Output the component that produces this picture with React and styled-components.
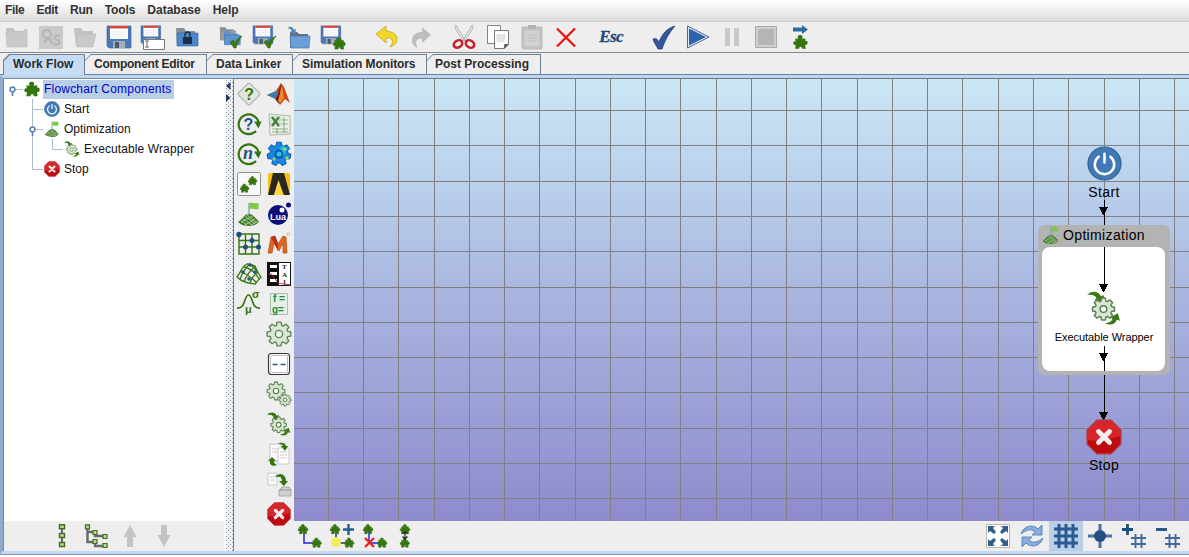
import React from 'react';
import styled, { createGlobalStyle, css } from 'styled-components';

const Global = createGlobalStyle`
  *, *::before, *::after { box-sizing: border-box; }
  html, body { margin: 0; padding: 0; overflow: hidden; background: #fff; }
  body { font-family: "Liberation Sans", Arial, sans-serif; font-size: 12px; color: #111; }
`;

/* ---------- layout ---------- */

const Window = styled.div`
  display: flex;
  flex-direction: column;
  width: 1189px;
  height: 557px;
  background: #fff;
`;

const MenuBar = styled.nav`
  display: flex;
  height: 22px;
  flex: none;
  padding-left: 5px;
  gap: 12px;
  background: linear-gradient(#fff, #dcdcdc);
  border-bottom: 1px solid #ccc;
`;

const MenuItem = styled.span`
  font-weight: bold;
  color: #333;
  line-height: 20px;
  letter-spacing: ${(p) => p.$spacing || 0}px;
`;

const Toolbar = styled.div`
  display: flex;
  align-items: center;
  flex: none;
  height: 31px;
  background: #eee;
  border-bottom: 1px solid #888;
`;

const ToolGroup = styled.div`
  display: flex;
  margin-left: ${(p) => p.$gap || 0}px;
`;

const ToolButton = styled.span`
  display: flex;
  align-items: center;
  justify-content: center;
  flex: none;
  width: ${(p) => p.$width || 34}px;
  height: 30px;
  background: ${(p) => (p.$active ? '#b8cfe5' : 'transparent')};
`;

const EscText = styled.span`
  font: italic bold 17px "Liberation Serif", serif;
  color: #1d4775;
  letter-spacing: -0.6px;
  -webkit-text-stroke: 0.3px #1d4775;
`;

const TabStrip = styled.div`
  display: flex;
  align-items: flex-end;
  flex: none;
  height: 22px;
  padding-left: 3px;
  background: #eee;
  border-bottom: 1px solid #6382a8;
`;

const chamfer = 'polygon(6px 0, 100% 0, 100% 100%, 0 100%, 0 6px)';

const Tab = styled.div`
  position: relative;
  isolation: isolate;
  width: ${(p) => p.$width}px;
  height: 20px;
  padding-left: ${(p) => p.$pad || 9}px;
  margin-bottom: ${(p) => (p.$selected ? -1 : 0)}px;
  ${(p) => p.$selected && css`height: 21px;`}
  line-height: 21px;
  font-weight: bold;
  color: #2b2b2b;
  white-space: nowrap;
  letter-spacing: ${(p) => p.$spacing || 0}px;
  background: #6f7f92;
  clip-path: ${chamfer};
  &::before {
    content: '';
    position: absolute;
    z-index: -1;
    inset: 1px 1px 0 ${(p) => (p.$selected ? 1 : 0)}px;
    background: ${(p) => (p.$selected ? '#c6dcf3' : '#eee')};
    clip-path: ${chamfer};
  }
`;

const Pane = styled.div`
  display: flex;
  flex: none;
  height: 479px;
  border-style: solid;
  border-width: 3px 0 3px 3px;
  border-color: #bfd5ec #bfd5ec #c4d9ee #8fabcf;
  box-shadow: 0 1px 0 #7a95b5;
  background: #eee;
`;

const Sidebar = styled.aside`
  display: flex;
  flex-direction: column;
  width: 222px;
  border-top: 1px solid #6f8dac;
  border-left: 1px solid #6f8dac;
  background: #fff;
`;

const Tree = styled.div`
  display: flex;
  flex: 1;
  flex-direction: column;
  background: #fff;
`;

const TreeRow = styled.div`
  display: flex;
  align-items: center;
  height: 20px;
`;

const TreeText = styled.span`
  line-height: 19px;
  padding: 0 ${(p) => (p.$selected ? 3 : 0)}px 0 1px;
  margin-left: 3px;
  letter-spacing: ${(p) => p.$spacing || 0}px;
  color: ${(p) => (p.$selected ? '#0000d0' : '#111')};
  background: ${(p) => (p.$selected ? '#b8cfe5' : 'transparent')};
  white-space: nowrap;
`;

const SideTools = styled.div`
  display: flex;
  height: 30px;
  padding-left: 41px;
  background: #eee;
  border-right: 1px solid #fff;
`;

const Splitter = styled.div`
  width: 8px;
  border-top: 1px solid #6f8dac;
  padding: 3px 0 0 1px;
  background-color: #f4f4f4;
  background-image: radial-gradient(circle at 1.5px 1.5px, #8798b0 0.6px, transparent 0.9px),
    radial-gradient(circle at 3.5px 3.5px, #8798b0 0.6px, transparent 0.9px);
  background-size: 4px 4px;
`;

const Work = styled.main`
  display: flex;
  flex: 1;
  border-left: 1px solid #70777e;
  border-top: 1px solid #70777e;
`;

const Palette = styled.div`
  display: flex;
  flex: none;
  width: 60px;
`;

const PaletteColumn = styled.div`
  display: flex;
  flex-direction: column;
  width: 30px;
`;

const PaletteCell = styled.span`
  display: flex;
  align-items: center;
  justify-content: center;
  flex: none;
  height: 30px;
`;

const CanvasArea = styled.div`
  display: flex;
  flex: 1;
  flex-direction: column;
`;

const Canvas = styled.div`
  position: relative;
  flex: 1;
  overflow: hidden;
  background: linear-gradient(#cbe7f5 0%, #b9cfeb 25%, #a9b4df 50%, #9b9fd6 75%, #8e8bcd 100%);
`;

const CanvasBar = styled.div`
  display: flex;
  flex: none;
  justify-content: space-between;
  height: 30px;
  padding-right: 4px;
  background: #eee;
`;

/* Nodes sit freely on the diagram; coordinates belong to the flow chart. */
const Node = styled.div`
  position: absolute;
  left: ${(p) => p.$x}px;
  top: ${(p) => p.$y}px;
  display: flex;
  flex-direction: column;
  align-items: center;
  width: 120px;
  margin-left: -60px;
`;

const NodeLabel = styled.span`
  font-size: ${(p) => p.$size || 14}px;
  line-height: 16px;
  margin-top: ${(p) => p.$gap || 0}px;
  letter-spacing: ${(p) => p.$spacing || 0}px;
  white-space: nowrap;
  color: #000;
`;

const GroupNode = styled.div`
  position: absolute;
  left: ${(p) => p.$x}px;
  top: ${(p) => p.$y}px;
  display: flex;
  flex-direction: column;
  width: 132px;
  height: 150px;
  padding: 0 5px 4px 4px;
  border-radius: 7px;
  background: #b3b3b3;
`;

const GroupTitle = styled.div`
  display: flex;
  align-items: center;
  height: 22px;
  padding-bottom: 2px;
  gap: 3px;
`;

const GroupBody = styled.div`
  flex: 1;
  border-radius: 8px;
  background: #fff;
`;

const Overlay = styled.svg`
  position: absolute;
  left: 0;
  top: 0;
`;

const Picture = styled.svg`
  display: block;
  flex: none;
  overflow: visible;
`;

/* ---------- icons ---------- */

const Icon = ({ size = 24, box = 24, children }) => (
  <Picture width={size} height={size} viewBox={`0 0 ${box} ${box}`}>{children}</Picture>
);

const G = '#35750f';
const PUZZLE =
  'M8.500 7C6.500 4 8 1 11.500 1S16.500 4 14.500 7L20 6.500L19.500 10.500C21.500 9 24 10.500 23.500 14C23 17 21 17 19.500 16L20.500 23L14.500 23C15.500 18.500 9 18.500 10 23L3.500 23L4.500 16.500C3 17.500 0 16.500 .5 13.500C1 10.500 3.500 10.500 4.500 11.500L3.500 6.500Z';

const Piece = ({ x = 0, y = 0, s = 1, fill = G }) => (
  <path
    d={PUZZLE}
    fill={fill}
    stroke={fill}
    strokeWidth={s < 0.6 ? 1.4 : 0}
    transform={`translate(${x} ${y}) scale(${s})`}
  />
);

const FolderShape = ({ fill = '#5e93cf', stroke = '#3c6ca5', back = '#8a9097', x = 0, y = 0, s = 1 }) => (
  <g transform={`translate(${x} ${y}) scale(${s})`}>
    <path d="M1 3h8l2 3h9v14H2z" fill={back} />
    <path d="M2 8h21v13H2z" fill={fill} stroke={stroke} strokeWidth=".7" />
  </g>
);

const OpenFolderGrey = ({ open }) => (
  <Icon>
    <path d="M1 3h7l2 3h10v15H3z" fill="#c2c2c2" />
    <path d={open ? 'M3 10l20-1l-3 13H4z' : 'M1 7h16l3-3l2 1v17H2z'} fill="#c9c9c9" stroke="#bcbcbc" strokeWidth=".6" />
  </Icon>
);

const FloppyShape = ({ s = 1 }) => (
  <g transform={`scale(${s})`}>
    <path d="M0 1h24v22H2l-2-2z" fill="#4a78b8" stroke="#35609a" strokeWidth=".6" />
    <path d="M3 1h18v13H3z" fill="#fff" />
    <path d="M3 1h18v2.500H3z" fill="#dd4433" />
    <path d="M5 7h14M5 9.500h14M5 12h14" stroke="#d7dbe2" strokeWidth=".7" />
    <path d="M6 16h12v7H6z" fill="#a5adb5" />
    <path d="M8 17h4v6H8z" fill="#4a5a70" />
  </g>
);

const CheckShape = ({ x, y }) => (
  <path transform={`translate(${x} ${y})`} d="M0 6l3-2l2 3C7 3 9 1 12 0C9 4 7 8 6 12H4z" fill="#3b7d0e" stroke="#265c05" strokeWidth=".5" />
);

const teeth = (cx, cy, r, n = 8) => {
  const pts = [];
  for (let i = 0; i < n; i++) {
    const a = (i / n) * Math.PI * 2 - Math.PI / 2;
    [[-0.3, 0.75], [-0.17, 1], [0.17, 1], [0.3, 0.75]].forEach(([d, k]) => {
      const t = a + (d * 8) / n;
      pts.push(`${(cx + Math.cos(t) * r * k).toFixed(2)},${(cy + Math.sin(t) * r * k).toFixed(2)}`);
    });
  }
  return pts.join(' ');
};

const Gear = ({ cx = 12, cy = 12, r = 11, w = 1.2 }) => (
  <g stroke="#5b8150" strokeWidth={w} strokeLinejoin="round">
    <polygon points={teeth(cx, cy, r)} fill="#d8e6d2" />
    <circle cx={cx} cy={cy} r={r * 0.3} fill="#f4f8f2" />
  </g>
);

const Wrapper = ({ size }) => (
  <Icon size={size} box={32}>
    <path d="M0 4C4-1 11 0 13 5l3-1l-1 8l-8-4l2-1C8 4 4 3 0 4z" fill="#397a16" />
    <path d="M17 30c5 3 10 1 11-3l3 1l-2-7l-7 4l2 1c-1 3-4 4-7 4z" fill="#397a16" />
    <Gear cx={15.5} cy={17} r={10.5} w={1.4} />
  </Icon>
);

const Power = ({ size }) => (
  <Icon size={size} box={36}>
    <circle cx="18" cy="18" r="17" fill="#4179b6" stroke="#316296" strokeWidth="1.2" />
    <path d="M12 11a10 10 0 1 0 12 0" fill="none" stroke="#fff" strokeWidth="2.600" strokeLinecap="round" />
    <path d="M18 8v9" stroke="#fff" strokeWidth="2.600" strokeLinecap="round" />
  </Icon>
);

const StopSign = ({ size }) => (
  <Icon size={size} box={36}>
    <path d="M11 1h14l10 10v14L25 35H11L1 25V11z" fill="#d6252b" stroke="#ad3a3f" strokeWidth="1.200" />
    <path d="M2 21C14 23 24 20 34 17v8l-9 9H11l-9-9z" fill="#be0b10" />
    <path d="M12.500 12.500l11 11m0-11l-11 11" stroke="#f7eeee" strokeWidth="4.800" strokeLinecap="round" />
  </Icon>
);

const Hill = ({ size }) => (
  <Icon size={size}>
    <path d="M1 20C6 17 7 12 12 12s6 5 10 7c-2 4-6 5-10 5s-8-1-11-4z" fill="#3f7a28" />
    <path d="M4 19l6 4M6 17l9 6M8 14l10 8M10 13l9 7M21 19l-7 4M18 17l-10 6M16 14L4 20" stroke="#c3dab2" strokeWidth=".8" />
    <path d="M12 13V1" stroke="#6da0b5" strokeWidth="1.300" />
    <path d="M12.500 1c3-1 4 1 9 0v6c-4 1-6-1-9 0z" fill="#7cc943" />
  </Icon>
);

const Cycle = ({ children }) => (
  <Icon>
    <path d="M21.500 10.500A10 9.800 0 1 0 19 19" fill="none" stroke={G} strokeWidth="2.200" />
    <path d="M17 9.500h7.500l-3 7z" fill={G} />
    {children}
  </Icon>
);

const IconText = styled.text`
  font-family: ${(p) => p.$font || '"Liberation Sans", sans-serif'};
  font-weight: bold;
  font-style: ${(p) => (p.$italic ? 'italic' : 'normal')};
  font-size: ${(p) => p.$size}px;
  fill: ${(p) => p.$fill};
`;

const GridMark = () => (
  <path d="M5 0v24M12 0v24M19 0v24M0 5h24M0 12h24M0 19h24" stroke="#2c5895" strokeWidth="3" fill="none" />
);

const SmallHash = () => <path d="M13.500 10v14M19.500 10v14M9 14h15M9 20h15" stroke="#416b9e" strokeWidth="1.900" />;

const fileTools = [
  <OpenFolderGrey />,
  <Icon><path d="M0 1h24v23H0z" fill="#cacaca" /><g fill="none" stroke="#b5b5b5" strokeWidth="2"><circle cx="8" cy="9" r="4" /><path d="M5 17l5-4l4 6M21 11c-6-2-7 3-3 4s3 6-3 4" /></g></Icon>,
  <OpenFolderGrey open />,
  <Icon><FloppyShape /></Icon>,
  <Icon><FloppyShape s={0.82} /><path d="M2.500 14.500h21v10h-21z" fill="#fff" stroke="#777" /><path d="M4 16h4M6 16v6M4 22h4" stroke="#555" strokeWidth=".9" /></Icon>,
  <Icon><FolderShape fill="#4b86c6" /><path d="M8 12h9v7H8z" fill="#1c2e48" /><path d="M10 12V9.500a2.500 2.500 0 0 1 5 0V12" fill="none" stroke="#1c2e48" strokeWidth="1.300" /></Icon>,
];

const modelTools = [
  <Icon><FolderShape s={0.72} fill="#9a9fa5" stroke="#888" /><FolderShape s={0.75} x={4} y={4} back="#5e93cf" /><CheckShape x={11} y={11} /></Icon>,
  <Icon><FloppyShape s={0.82} /><CheckShape x={11} y={11} /></Icon>,
  <Icon><path d="M3 7h7l2 2h9v14H3z" fill="#686e75" /><path d="M3 11h20l-1 12H4z" fill="#6b9dd8" stroke="#4779b4" strokeWidth=".7" /><path d="M0 4c3-4 6-2 7 1l2-1l-1 6l-5-3l2-1C4 4 2 3 0 4z" fill="#5484bd" /></Icon>,
  <Icon><FloppyShape s={0.82} /><Piece x={12} y={12} s={0.52} /></Icon>,
];

const historyTools = [
  <Icon><path d="M11 1L1 9l10 9v-5c6-1 9 3 4 9c10-3 10-15-4-16z" fill="#f3d72d" stroke="#c4a60e" strokeWidth=".8" /></Icon>,
  <Icon><path d="M13 2l9 8l-9 8v-4c-5-1-8 3-4 9C0 20 1 7 13 7z" fill="#bdbdbd" /></Icon>,
];

const editTools = [
  <Icon>
    <path d="M4 0l9 15l-2 1L3 3zM20 0l-9 15l2 1L21 3z" fill="#e4e7e8" stroke="#8d9294" strokeWidth=".6" />
    <g fill="none" stroke="#c7202c" strokeWidth="2.600"><ellipse cx="6" cy="19" rx="4.500" ry="3.400" transform="rotate(-35 6 19)" /><ellipse cx="18" cy="19" rx="4.500" ry="3.400" transform="rotate(35 18 19)" /></g>
  </Icon>,
  <Icon><path d="M1.500.5h13v18h-13z" fill="#fff" stroke="#777" strokeWidth=".9" /><path d="M8.500 5.500h14v14l-4 4h-10z" fill="#fff" stroke="#666" strokeWidth=".9" /><path d="M22.500 19l-5 5l1-5z" fill="#555" /><path d="M10.500 10h9M10.500 12h9M10.500 14h9M10.500 16h8" stroke="#bbb" strokeWidth=".8" /></Icon>,
  <Icon><rect x="2" y="2" width="20" height="22" rx="1" fill="#c5c5c5" stroke="#b8b8b8" /><path d="M8 0h8v4H8z" fill="#b2b2b2" /><path d="M5 6h14v15H5z" fill="#d3d3d3" /><path d="M7 10h10M7 13h10M7 16h8" stroke="#bbb" /></Icon>,
  <Icon><path d="M3 3.500l18 18M21 3.500l-18 18" stroke="#f50d0d" strokeWidth="2.200" /></Icon>,
];

const runTools = [
  <Icon><path d="M1 14c2-1 4-1 6 3C10 9 15 3 23 1C17 8 13 15 10 24H6C4 20 2 18 1 14z" fill="#35569c" stroke="#20386f" strokeWidth=".7" /></Icon>,
  <Icon><path d="M1.500 1v22L23 12z" fill="#dce8f5" stroke="#4f6984" strokeWidth="1" /><path d="M3 3.500v17l17-8.500z" fill="#2d63ad" /></Icon>,
  <Icon><path d="M5 3h5v18H5zM14 3h5v18h-5z" fill="#c8c8c8" /></Icon>,
  <Icon><path d="M1.500 1.500h21v21h-21z" fill="#cfcfcf" stroke="#aaa" /><path d="M4 4h16v16H4z" fill="#b5b5b5" /></Icon>,
  <Icon><path d="M5 2.500h9V0l6 4.500L14 9V6.500H5z" fill="#2e6c9d" /><Piece x={5} y={9.500} s={0.62} /></Icon>,
];

const leftPalette = [
  <Icon><rect x="3.800" y="3.800" width="16.400" height="16.400" rx="2" transform="rotate(45 12 12)" fill="#e1e5de" stroke="#a9b0a6" /><IconText x="7.300" y="17.500" $size={16} $fill={G}>?</IconText></Icon>,
  <Cycle><IconText x="6.500" y="17.500" $size={16} $fill="#1e5680">?</IconText></Cycle>,
  <Cycle><IconText x="6" y="17" $size={18} $italic $font='"Liberation Serif", serif' $fill="#1e5680">n</IconText></Cycle>,
  <Icon><rect x=".5" y=".5" width="23" height="23" rx="2" fill="#f8f8f8" stroke="#8b918a" /><Piece x={3} y={11.500} s={0.38} /><Piece x={11} y={4} s={0.38} /></Icon>,
  <Hill size={24} />,
  <Icon><path d="M2 2h20v20H2zM8.500 2v20M15 2v20M2 8.500h20M2 15h20" fill="none" stroke={G} strokeWidth="1.400" /><g fill="#1d5087"><circle cx="2" cy="2.500" r="2.700" /><circle cx="15" cy="8.500" r="2.500" /><circle cx="8.500" cy="15" r="2.500" /><circle cx="21.500" cy="15" r="2.500" /></g></Icon>,
  <Icon><g fill="none" stroke={G} strokeWidth="1.300"><path d="M0 15C4 10 5 4 10 2c4 0 6 1 8 2c2 5 3 8 6 11c-2 3-5 5-6 7c-6-1-12-1-18-7zM4 10c6 2 10 5 16 11M7 5c5 1 11 5 15 12M12 2c4 2 7 6 9 9M18 4C14 8 9 14 7 20M21 10c-4 3-7 7-8 12M13 2C9 5 5 12 3 17" /></g><g fill="#25598a"><circle cx="13" cy="3" r="1.800" /><circle cx="6" cy="10" r="1.800" /><circle cx="18" cy="10" r="1.800" /><circle cx="12" cy="17" r="1.800" /></g></Icon>,
  <Icon><path d="M0 16C9 17 7 3 11.500 3S14 17 23 16" fill="none" stroke={G} strokeWidth="1.700" /><IconText x="8" y="21" $size={11} $fill={G}>μ</IconText><IconText x="15" y="6" $size={11} $fill={G}>σ</IconText></Icon>,
];

const rightPalette = [
  <Icon><path d="M0 13l9-4l5-8l3 4l6 16l-5-4l-5 6l-4-7z" fill="#c84b15" /><path d="M0 13l9-4l2-3v5l-3 6z" fill="#397faa" /><path d="M14 1c-2 7-3 14-6 16l4 5z" fill="#6e1d18" /><path d="M15 4l2 12l-4 5l-2-2z" fill="#f28a29" /></Icon>,
  <Icon><path d="M2 2l21 2v18l-20 1z" fill="#edf2eb" stroke="#a8b9a4" /><path d="M13 8h8M13 12h8M5 17h16M5 20h16M17 5v16M10 16v6" stroke="#91ad8a" strokeWidth="1.200" /><path d="M3 4h11v11H3z" fill="#d4e1ce" /><path d="M5 5l7 9M12 5l-7 9" stroke="#427b3e" strokeWidth="2.200" /></Icon>,
  <Icon><polygon points={teeth(12, 12, 12, 7)} fill="#1688df" stroke="#0c55b5" /><path d="M15 4l5 2l-3 8l-6-4z" fill="#23c4e0" /><circle cx="12" cy="12" r="3.500" fill="#25d1d5" stroke="#164bb7" strokeWidth="2" /><g fill="#9fdb53"><circle cx="18" cy="7" r="1.500" /><circle cx="7" cy="17" r="1.500" /><circle cx="20" cy="16" r="1.700" /></g></Icon>,
  <Icon><rect x="1" y="1" width="22" height="22" rx="2" fill="#f7bd10" /><path d="M6 1h11l6 22h-6L11.500 9L7 23H1z" fill="#282722" /><path d="M11.500 8L16 23H7z" fill="#ffd44b" /></Icon>,
  <Icon><circle cx="11" cy="13" r="10" fill="#0b0b7b" /><circle cx="15" cy="8" r="2.500" fill="#fff" /><circle cx="21.500" cy="3" r="2.500" fill="#0b0b7b" /><IconText x="3" y="18" $size={9} $fill="#fff">Lua</IconText></Icon>,
  <Icon><path d="M1 21L4 5l4-1l3 8l5-8l3 1l1 16h-4V11l-4 8L7 11L5 21z" fill="#de681f" stroke="#b34818" strokeWidth=".7" /><path d="M4 5l4 8l3 6V12L8 4z" fill="#b93017" /><circle cx="21.500" cy="2" r="1.500" fill="none" stroke="#e9b480" /></Icon>,
  <Icon><path d="M0 0h24v24H0z" fill="#111" /><path d="M12 1h11v22H12z" fill="#fff" /><path d="M3 3h7v3H3zM3 10h7v3H3zM3 17h7v3H3z" fill="#fff" /><path d="M1 12c6-2 7 8 11 9s5 1 11 2" fill="none" stroke="#b02038" /><IconText x="17.500" y="7" textAnchor="middle" $size={6.5} $font='"Liberation Serif", serif' $fill="#111">T</IconText><IconText x="17.500" y="14.500" textAnchor="middle" $size={6.5} $font='"Liberation Serif", serif' $fill="#111">A</IconText><IconText x="17.500" y="22" textAnchor="middle" $size={6.5} $font='"Liberation Serif", serif' $fill="#111">I</IconText></Icon>,
  <Icon><path d="M3.500 1.500h17v21h-17z" fill="#e6eee5" stroke="#b0c0ac" /><IconText x="6" y="9.500" $size={10} $fill="#15913b">f =</IconText><IconText x="5" y="20.500" $size={10} $fill="#15913b">g=</IconText></Icon>,
  <Icon><Gear r={12} w={1.300} /></Icon>,
  <Icon><rect x="1.500" y="1.500" width="21" height="21" rx="3" fill="#fff" stroke="#333" strokeWidth="1.100" /><rect x="3.500" y="3.500" width="17" height="17" rx="1" fill="#fff" stroke="#aaa" strokeWidth=".8" /><path d="M5.500 12.500h5M13.500 12.500h5" stroke="#235e8b" strokeWidth="1.400" /></Icon>,
  <Icon><Gear cx={9} cy={9} r={9} w={1.100} /><Gear cx={18} cy={18} r={6} w={1} /></Icon>,
  <Wrapper size={24} />,
  <Icon><path d="M3 2h11v17H3z" fill="#fafafa" stroke="#bbb" strokeWidth=".8" /><path d="M11 6h11v16H11z" fill="#fff" stroke="#bbb" strokeWidth=".8" /><path d="M13 10h7M13 13h7M13 16h7M5 7h5M5 10h5" stroke="#ccc" /><path d="M11 2c4-3 8 0 8 2h2l-3 5l-4-5h2c-1-2-3-2-5-2zM10 23c-4 2-8 0-7-4H1l4-4l4 4H7c0 2 1 3 3 4z" fill={G} /></Icon>,
  <Icon><path d="M1 1h9v12H1z" fill="#fafafa" stroke="#bbb" strokeWidth=".8" /><path d="M3 5h5M3 8h5" stroke="#ccc" /><path d="M8 5c5-6 11-2 11 4h2l-4 5l-5-5h3c0-4-2-5-7-4z" fill={G} /><path d="M12 18l3-3h7l2 3v6H12z" fill="#cfd0d1" stroke="#9d9fa0" strokeWidth=".8" /><path d="M12 18h12" stroke="#999" /></Icon>,
  <StopSign size={24} />,
];

const treeTools = [
  <Icon><path d="M12 2v20" stroke="#666" strokeWidth="2" /><g fill="#bad894" stroke="#426c25" strokeWidth="1.400"><path d="M9.500.8h5v4h-5zM9.500 9.500h5v4h-5zM9.500 18.500h5v4h-5z" /></g></Icon>,
  <Icon><path d="M3.500 4v14h8M4 8h7v4h9M11 18v4h9" fill="none" stroke="#686868" strokeWidth="2.400" /><g fill="#bad894" stroke="#426c25" strokeWidth="1.200"><path d="M1.500 .8h4v4h-4zM9 6.500h4v4H9zM19 10.500h4v4h-4zM9 15.500h4v4H9zM19 19.500h4v4h-4z" /></g></Icon>,
  <Icon><path d="M12 1l6.500 12H15v10H9V13H5.500z" fill="#c4c4c4" /></Icon>,
  <Icon><path d="M12 23l6.500-12H15V1H9v10H5.500z" fill="#c4c4c4" /></Icon>,
];

const linkTools = [
  <Icon><path d="M5 8v11h9" fill="none" stroke="#2424dd" strokeWidth="1.500" /><Piece s={0.42} x={-1} y={0} /><Piece s={0.42} x={12.500} y={13.500} /></Icon>,
  <Icon><path d="M4 8v11h11" fill="none" stroke="#2424dd" strokeWidth="1.500" /><Piece s={0.42} x={-2} y={0} /><Piece s={0.42} x={12} y={13.500} /><circle cx="4" cy="18" r="5" fill="#f3ed55" /><path d="M16.500 0v11M11 5.500h11" stroke="#205f92" strokeWidth="2.400" /></Icon>,
  <Icon><path d="M4 8v11h11" fill="none" stroke="#2424dd" strokeWidth="1.500" /><Piece s={0.42} x={-2} y={0} /><Piece s={0.42} x={12} y={13.500} /><path d="M0 14l9 9M9 14l-9 9" stroke="#e91f24" strokeWidth="2.200" /></Icon>,
  <Icon><Piece s={0.42} x={2} y={0} /><Piece s={0.4} x={2} y={14} /><path d="M7 7v9M4.500 9.500L7 8l2.500 1.500M4.500 12.500L7 15l2.500-2.500" fill="none" stroke="#222" strokeWidth="1.200" /></Icon>,
];

const viewTools = [
  <Icon><path d="M.5.500h23v23H.5z" fill="#fff" stroke="#b7b7a5" /><path d="M2 2h7L7 4l3 4l-2 2l-4-3l-2 2zM22 2h-7l2 2l-3 4l2 2l4-3l2 2zM2 22h7l-2-2l3-4l-2-2l-4 3l-2-2zM22 22h-7l2-2l-3-4l2-2l4 3l2-2z" fill="#335d8a" /></Icon>,
  <Icon><path d="M1 10C4 1 13 0 18 5l4-4v10H12l3-3C11 4 6 6 1 10z" fill="#86ade0" stroke="#547fb2" strokeWidth=".9" /><path d="M23 14C20 23 11 24 6 19l-4 4V13h10l-3 3c4 4 9 2 14-2z" fill="#86ade0" stroke="#547fb2" strokeWidth=".9" /></Icon>,
  <Icon><GridMark /></Icon>,
  <Icon><path d="M12 0v24M0 12h24" stroke="#527297" strokeWidth="3" /><circle cx="12" cy="12" r="6" fill="#234e84" /></Icon>,
  <Icon><path d="M5.500 0v11M0 5.500h11" stroke="#1e4c7f" strokeWidth="2.800" /><SmallHash /></Icon>,
  <Icon><path d="M0 5.500h11" stroke="#1e4c7f" strokeWidth="2.800" /><SmallHash /></Icon>,
];

/* ---------- tree ---------- */

const Guides = ({ depth, last, handle }) => {
  const width = 20 * depth + 20;
  const x = 20 * depth + 8;
  return (
    <Picture width={width} height="20" viewBox={`0 0 ${width} 20`}>
      <g stroke="#adbdd1" fill="none">
        {depth > 0 && <path d={`M28.500 0V${depth === 1 && last ? 10.500 : 20}`} />}
        {depth === 2 && <path d="M48.500 0V10.500" />}
        <path d={`M${x}.500 10.500H${width - 1}`} />
      </g>
      {handle && (
        <g stroke="#557fae">
          <path d={`M${x}.500 12V17`} strokeWidth="1.600" />
          <circle cx={x + 0.5} cy="10.5" r="2.400" fill="#fff" strokeWidth="1.500" />
        </g>
      )}
    </Picture>
  );
};

/* ---------- flow canvas ---------- */

const rows = [110, 145, 181, 216, 251, 287, 322, 357, 392, 428, 463, 498];
const cols = Array.from({ length: 25 }, (_, i) => Math.floor(328.300 + i * 35.260));

const GridLines = () => (
  <Overlay width="895" height="442" viewBox="294 79 895 442" shapeRendering="crispEdges">
    <g fill="#808080">
      {rows.map((y) => <rect key={y} x="294" y={y} width="895" height="1" />)}
      {cols.map((x) => <rect key={x} x={x} y="79" width="1" height="442" />)}
    </g>
  </Overlay>
);

const Links = () => (
  <Overlay width="895" height="442" viewBox="294 79 895 442" shapeRendering="crispEdges">
    <g fill="#000">
      <path d="M1104 200h1v25h-1zM1104 247h1v43h-1zM1104 346h1v25h-1zM1104 375h1v43h-1z" />
      <path d="M1099 207h9l-4 8h-1zM1099 284h9l-4 8h-1zM1099 353h9l-4 8h-1zM1099 412h9l-4 8h-1z" />
    </g>
  </Overlay>
);

const Buttons = ({ items, width, active }) =>
  items.map((icon, i) => <ToolButton key={i} $width={width} $active={i === active}>{icon}</ToolButton>);

export default function App() {
  return (
    <Window>
      <Global />
      <MenuBar>
        <MenuItem $spacing={-0.3}>File</MenuItem>
        <MenuItem $spacing={-0.3}>Edit</MenuItem>
        <MenuItem $spacing={-0.2}>Run</MenuItem>
        <MenuItem $spacing={-0.1}>Tools</MenuItem>
        <MenuItem>Database</MenuItem>
        <MenuItem>Help</MenuItem>
      </MenuBar>
      <Toolbar>
        <ToolGroup><Buttons items={fileTools} /></ToolGroup>
        <ToolGroup $gap={10}><Buttons items={modelTools} /></ToolGroup>
        <ToolGroup $gap={20}><Buttons items={historyTools} /></ToolGroup>
        <ToolGroup $gap={9}><Buttons items={editTools} /></ToolGroup>
        <ToolGroup $gap={11}><ToolButton><EscText>Esc</EscText></ToolButton></ToolGroup>
        <ToolGroup $gap={19}><Buttons items={runTools} /></ToolGroup>
      </Toolbar>
      <TabStrip>
        <Tab $width={82} $pad={10} $selected>Work Flow</Tab>
        <Tab $width={122} $spacing={-0.25}>Component Editor</Tab>
        <Tab $width={86}>Data Linker</Tab>
        <Tab $width={134} $spacing={-0.1}>Simulation Monitors</Tab>
        <Tab $width={114} $pad={8}>Post Processing</Tab>
      </TabStrip>
      <Pane>
        <Sidebar>
          <Tree>
            <TreeRow><Guides depth={0} handle /><Icon size={16}><Piece /></Icon><TreeText $selected $spacing={0.2}>Flowchart Components</TreeText></TreeRow>
            <TreeRow><Guides depth={1} /><Power size={16} /><TreeText>Start</TreeText></TreeRow>
            <TreeRow><Guides depth={1} handle /><Hill size={16} /><TreeText>Optimization</TreeText></TreeRow>
            <TreeRow><Guides depth={2} last /><Wrapper size={16} /><TreeText $spacing={0.1}>Executable Wrapper</TreeText></TreeRow>
            <TreeRow><Guides depth={1} last /><StopSign size={16} /><TreeText>Stop</TreeText></TreeRow>
          </Tree>
          <SideTools><Buttons items={treeTools} /></SideTools>
        </Sidebar>
        <Splitter>
          <Picture width="6" height="20" viewBox="0 0 6 20"><path d="M4.500 0v8L0 4zM0 12v8l4.500-4z" fill="#24395f" /></Picture>
        </Splitter>
        <Work>
          <Palette>
            <PaletteColumn>{leftPalette.map((icon, i) => <PaletteCell key={i}>{icon}</PaletteCell>)}</PaletteColumn>
            <PaletteColumn>{rightPalette.map((icon, i) => <PaletteCell key={i}>{icon}</PaletteCell>)}</PaletteColumn>
          </Palette>
          <CanvasArea>
            <Canvas>
              <GridLines />
              <Node $x={810} $y={67}><Power size={35} /><NodeLabel $gap={3} $spacing={0.35}>Start</NodeLabel></Node>
              <GroupNode $x={744} $y={146}>
                <GroupTitle><Hill size={18} /><NodeLabel $spacing={0.35}>Optimization</NodeLabel></GroupTitle>
                <GroupBody />
              </GroupNode>
              <Node $x={810} $y={212}><Wrapper size={34} /><NodeLabel $size={11} $gap={4} $spacing={-0.05}>Executable Wrapper</NodeLabel></Node>
              <Links />
              <Node $x={810} $y={340}><StopSign size={36} /><NodeLabel $gap={2} $spacing={0.35}>Stop</NodeLabel></Node>
            </Canvas>
            <CanvasBar>
              <ToolGroup><Buttons items={linkTools} width={33} /></ToolGroup>
              <ToolGroup><Buttons items={viewTools} active={2} /></ToolGroup>
            </CanvasBar>
          </CanvasArea>
        </Work>
      </Pane>
    </Window>
  );
}
